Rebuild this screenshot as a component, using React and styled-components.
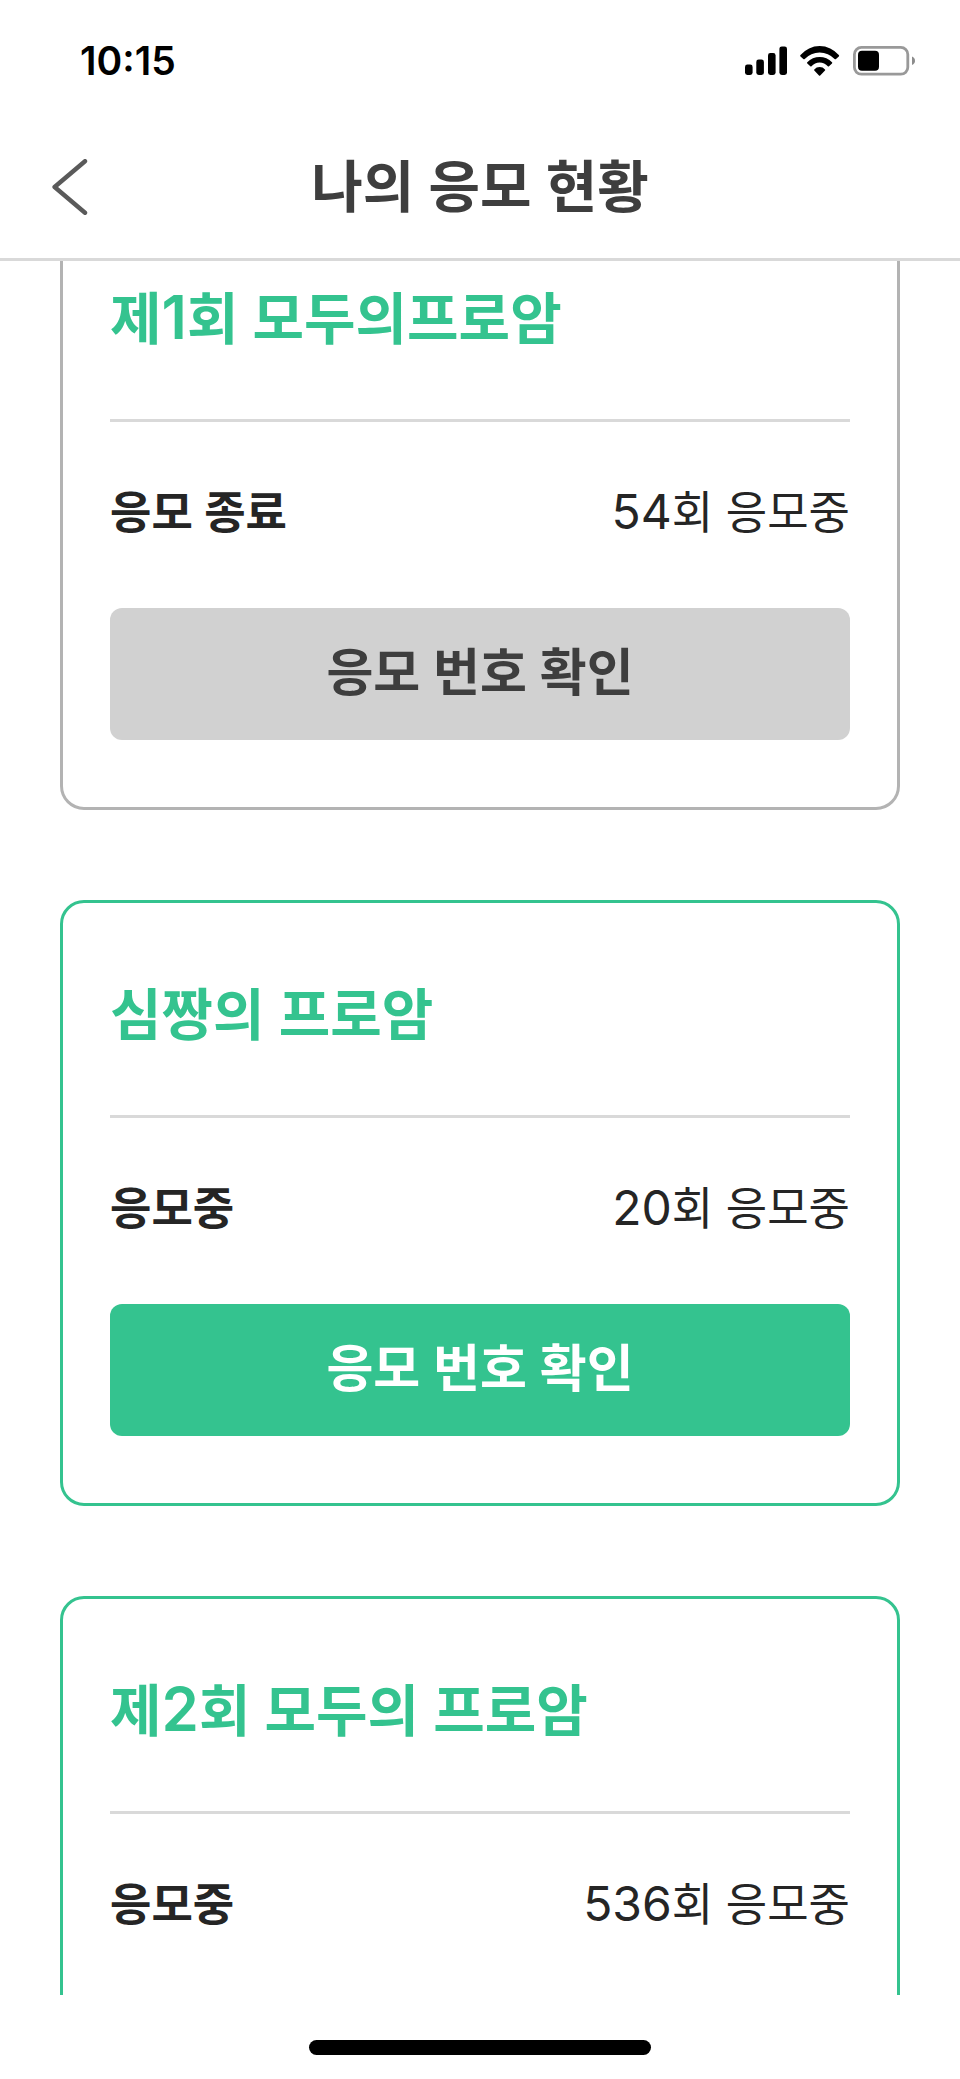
import React, { useLayoutEffect, useRef } from "react";
import styled, { createGlobalStyle } from "styled-components";

const GREEN = "#34c38f";

const entries = [
  { id: 1, title: "제1회 모두의프로암", status: "응모 종료", count: 54, closed: true },
  { id: 2, title: "심짱의 프로암", status: "응모중", count: 20 },
  { id: 3, title: "제2회 모두의 프로암", status: "응모중", count: 536 }
];

const SignalIcon = () => (
  <svg width="42" height="30" viewBox="0 0 42 30" aria-hidden="true">
    <rect x="0" y="18.5" width="7.6" height="10.5" rx="2.4" />
    <rect x="11.3" y="13.5" width="7.6" height="15.5" rx="2.4" />
    <rect x="23" y="7" width="7.6" height="22" rx="2.4" />
    <rect x="34.4" y="0.4" width="7.6" height="28.6" rx="2.4" />
  </svg>
);

const WifiIcon = () => (
  <svg width="40" height="30" viewBox="0 0 40 30" aria-hidden="true">
    <path d="M.5 9A25 25 0 0 1 38.8 9Q39.5 9.8 38.8 10.5L36 13Q35.3 13.6 34.6 13A20.5 20.5 0 0 0 4.7 13Q4 13.6 3.3 13L.5 10.5Q-.2 9.8 .5 9Z" />
    <path d="M7.3 16.3A17 17 0 0 1 32 16.3Q32.6 16.9 32 17.5L29 20.3Q28.4 20.9 27.8 20.3A10.6 10.6 0 0 0 11.5 20.3Q10.9 20.9 10.3 20.3L7.3 17.5Q6.7 16.9 7.3 16.3Z" />
    <path d="M14.3 23.5A7 7 0 0 1 25 23.5Q25.5 24 25 24.5L20.2 29.4Q19.6 30 19 29.4L14.3 24.5Q13.8 24 14.3 23.5Z" />
  </svg>
);

const BatteryIcon = () => (
  <svg width="62" height="30" viewBox="0 0 62 30" aria-hidden="true">
    <rect x="1.4" y="1.4" width="53.4" height="26.8" rx="7" fill="none" stroke="#999" strokeWidth="2.8" />
    <rect x="5" y="4.8" width="21" height="20" rx="4" />
    <path d="M59 10.4Q62 11.6 62 14.7Q62 17.8 59 19Z" fill="#8c8c8c" />
  </svg>
);

// digits are set slightly larger than the hangul beside them
const withDigits = text =>
  text
    .split(/(\d+)/)
    .map((part, i) => (/^\d+$/.test(part) ? <Digits key={i}>{part}</Digits> : part));

const EntryCard = ({ title, status, count, closed }) => (
  <Card $closed={closed}>
    <CardTitle>{withDigits(title)}</CardTitle>
    <Divider />
    <InfoRow>
      <Status>{status}</Status>
      <Count>{withDigits(`${count}회 응모중`)}</Count>
    </InfoRow>
    <CheckButton type="button" $closed={closed}>
      응모 번호 확인
    </CheckButton>
  </Card>
);

const App = () => {
  const listRef = useRef(null);

  // open the list with the first card partly scrolled under the header
  useLayoutEffect(() => {
    listRef.current.scrollTop = 147;
  }, []);

  return (
    <Container>
      <GlobalStyle />
      <StatusBar>
        <Time>10:15</Time>
        <StatusIcons>
          <SignalIcon />
          <WifiIcon />
          <BatteryIcon />
        </StatusIcons>
      </StatusBar>
      <Header>
        <BackButton type="button" aria-label="뒤로">
          <svg width="36" height="56" viewBox="0 0 36 56" aria-hidden="true">
            <path
              d="M33 2.2L2.6 28L33 53.8"
              fill="none"
              stroke="#5a5a5a"
              strokeWidth="4.4"
              strokeLinecap="round"
              strokeLinejoin="round"
            />
          </svg>
        </BackButton>
        <PageTitle>나의 응모 현황</PageTitle>
      </Header>
      <List ref={listRef}>
        {entries.map(entry => (
          <EntryCard key={entry.id} {...entry} />
        ))}
      </List>
      <BottomBar>
        <HomeIndicator />
      </BottomBar>
    </Container>
  );
};

const GlobalStyle = createGlobalStyle`
  * {
    box-sizing: border-box;
  }

  body {
    margin: 0;
    background-color: white;
    font-family: Inter, "Noto Sans CJK KR", sans-serif;
  }
`;

const Container = styled.div`
  height: 100vh;
  display: flex;
  flex-direction: column;
  background-color: white;
`;

const StatusBar = styled.div`
  display: flex;
  flex-shrink: 0;
  align-items: center;
  justify-content: space-between;
  padding: 38px 45px 32px 80px;
`;

const Time = styled.span`
  font-size: 39px;
  font-weight: 600;
  line-height: 46px;
  color: black;
`;

const StatusIcons = styled.div`
  display: flex;
  align-items: center;
  gap: 13px;
`;

const Header = styled.header`
  display: grid;
  flex-shrink: 0;
  grid-template-columns: 1fr auto 1fr;
  align-items: center;
  padding: 26px 52px;
  border-bottom: 3px solid #d9d9d9;
`;

const BackButton = styled.button`
  display: flex;
  justify-self: start;
  padding: 0;
  border: none;
  background: none;
  cursor: pointer;
`;

const PageTitle = styled.h1`
  margin: 0;
  font-size: 56px;
  font-weight: 600;
  line-height: 90px;
  color: #3e3e3e;
`;

const List = styled.main`
  flex: 1;
  min-height: 0;
  display: flex;
  flex-direction: column;
  gap: 90px;
  padding: 90px 60px;
  overflow-y: auto;
  scrollbar-width: none;
`;

const Card = styled.section`
  flex-shrink: 0;
  padding: 67px 47px;
  border: 3px solid ${props => (props.$closed ? "#b3b3b3" : GREEN)};
  border-radius: 24px;
`;

const CardTitle = styled.h2`
  --digit-size: 60px;
  margin: 0;
  font-size: 56px;
  font-weight: 600;
  line-height: 90px;
  color: ${GREEN};
`;

const Digits = styled.span`
  font-size: var(--digit-size);
  line-height: 1;
`;

const Divider = styled.hr`
  height: 3px;
  margin: 55px 0;
  border: none;
  background-color: #d9d9d9;
`;

const InfoRow = styled.div`
  --digit-size: 48px;
  display: flex;
  justify-content: space-between;
  margin-bottom: 59px;
  font-size: 45px;
  line-height: 72px;
  color: #252525;
`;

const Status = styled.span`
  font-weight: 600;
`;

const Count = styled.span`
  font-weight: 400;
`;

const CheckButton = styled.button`
  display: block;
  width: 100%;
  padding: 29px 30px 31px;
  border: none;
  border-radius: 12px;
  background-color: ${props => (props.$closed ? "#d1d1d1" : GREEN)};
  color: ${props => (props.$closed ? "#3e3e3e" : "white")};
  font-family: inherit;
  font-size: 51px;
  font-weight: 600;
  line-height: 72px;
  cursor: pointer;
`;

const BottomBar = styled.div`
  display: flex;
  flex-shrink: 0;
  justify-content: center;
  padding: 45px 0 24px;
`;

const HomeIndicator = styled.div`
  width: 342px;
  height: 15px;
  border-radius: 8px;
  background-color: black;
`;

export default App;
